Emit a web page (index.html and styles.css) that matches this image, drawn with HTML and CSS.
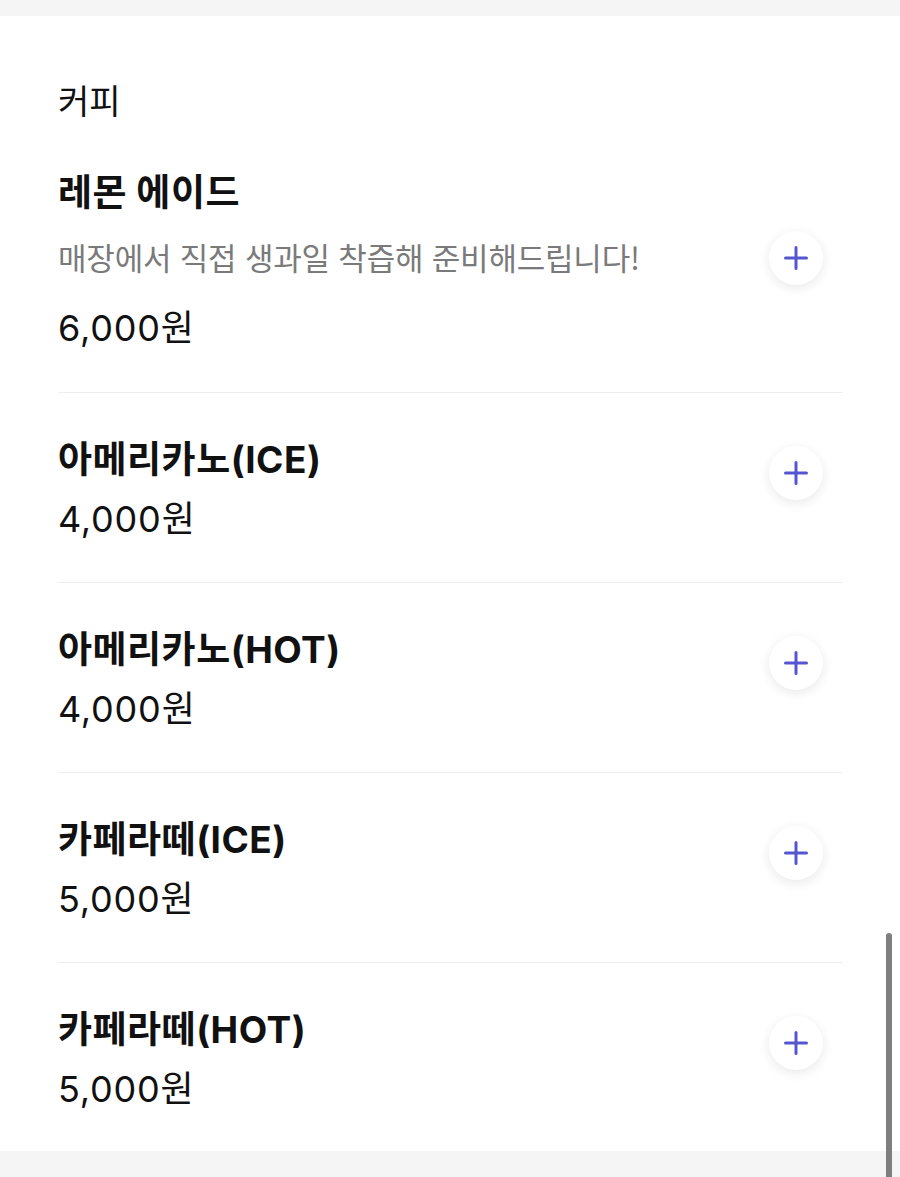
FILE: index.html
```html
<!DOCTYPE html>
<html lang="ko">
<head>
<meta charset="utf-8">
<title>커피</title>
<link rel="stylesheet" href="styles.css">
</head>
<body>
<div class="page">
  <div class="band-top"></div>
  <section class="menu">
    <h2 class="menu-title">커피</h2>
    <ul class="items">
      <li class="item first">
        <div class="info">
          <div class="name">레몬 에이드</div>
          <div class="desc">매장에서 직접 생과일 착즙해 준비해드립니다!</div>
          <div class="price">6,000원</div>
        </div>
        <button class="add" aria-label="추가"><svg viewBox="0 0 24 24" width="24" height="24"><path d="M12 1.5v21M1.5 12h21"/></svg></button>
      </li>
      <li class="item compact">
        <div class="info">
          <div class="name">아메리카노(ICE)</div>
          <div class="price">4,000원</div>
        </div>
        <button class="add" aria-label="추가"><svg viewBox="0 0 24 24" width="24" height="24"><path d="M12 1.5v21M1.5 12h21"/></svg></button>
      </li>
      <li class="item compact">
        <div class="info">
          <div class="name">아메리카노(HOT)</div>
          <div class="price">4,000원</div>
        </div>
        <button class="add" aria-label="추가"><svg viewBox="0 0 24 24" width="24" height="24"><path d="M12 1.5v21M1.5 12h21"/></svg></button>
      </li>
      <li class="item compact">
        <div class="info">
          <div class="name">카페라떼(ICE)</div>
          <div class="price">5,000원</div>
        </div>
        <button class="add" aria-label="추가"><svg viewBox="0 0 24 24" width="24" height="24"><path d="M12 1.5v21M1.5 12h21"/></svg></button>
      </li>
      <li class="item compact last">
        <div class="info">
          <div class="name">카페라떼(HOT)</div>
          <div class="price">5,000원</div>
        </div>
        <button class="add" aria-label="추가"><svg viewBox="0 0 24 24" width="24" height="24"><path d="M12 1.5v21M1.5 12h21"/></svg></button>
      </li>
    </ul>
  </section>
  <div class="band-bottom"></div>
  <div class="scrollbar"></div>
</div>
</body>
</html>
```

FILE: styles.css
```css
* { box-sizing: border-box; }
html, body {
  margin: 0;
  padding: 0;
  background: #f5f5f5;
}
body {
  font-family: "Noto Sans CJK KR", "Noto Sans", sans-serif;
  color: #111;
}
.page {
  position: relative;
  width: 900px;
  height: 1177px;
  overflow: hidden;
  background: #f5f5f5;
}
.band-top { height: 16px; background: #f5f5f5; }
.menu {
  background: #fff;
  padding: 64px 57px 0 58px;
}
.menu-title {
  margin: 0 0 6px;
  font-size: 34px;
  font-weight: 400;
  line-height: 40px;
  color: #111;
}
.items {
  list-style: none;
  margin: 0;
  padding: 0;
}
.item {
  display: flex;
  align-items: center;
  justify-content: space-between;
  padding: 45px 0 41px;
  border-bottom: 1px solid #eeeeee;
}
.item.first { padding-bottom: 42px; }
.item.last { border-bottom: none; padding-bottom: 40px; }
.info { display: flex; flex-direction: column; }
.name {
  font-family: Inter, "Noto Sans CJK KR", sans-serif;
  font-size: 37px;
  font-weight: 700;
  line-height: 44px;
  letter-spacing: 0.5px;
  color: #111;
}
.desc {
  font-size: 31px;
  font-weight: 400;
  line-height: 36px;
  color: #7a7a7a;
  margin-top: 24px;
  letter-spacing: -0.2px;
}
.price {
  font-family: Inter, "Noto Sans CJK KR", sans-serif;
  font-size: 36px;
  font-weight: 400;
  line-height: 44px;
  letter-spacing: 0.8px;
  color: #111;
  margin-top: 31px;
}
.compact .price { margin-top: 15px; }
.add {
  width: 54px;
  height: 54px;
  margin-right: 20px;
  margin-bottom: 6px;
  border: none;
  border-radius: 50%;
  background: #fff;
  box-shadow: 0 3px 12px rgba(0, 0, 0, 0.09);
  display: flex;
  align-items: center;
  justify-content: center;
  padding: 0;
  flex-shrink: 0;
}
.compact .add { margin-bottom: 33px; }
.add svg path {
  stroke: #5556cf;
  stroke-width: 3;
  stroke-linecap: round;
  fill: none;
}
.band-bottom { height: 27px; background: #f5f5f5; }
.scrollbar {
  position: absolute;
  left: 886px;
  top: 933px;
  width: 6px;
  height: 260px;
  border-radius: 3px;
  background: #7f7f7f;
}
```
